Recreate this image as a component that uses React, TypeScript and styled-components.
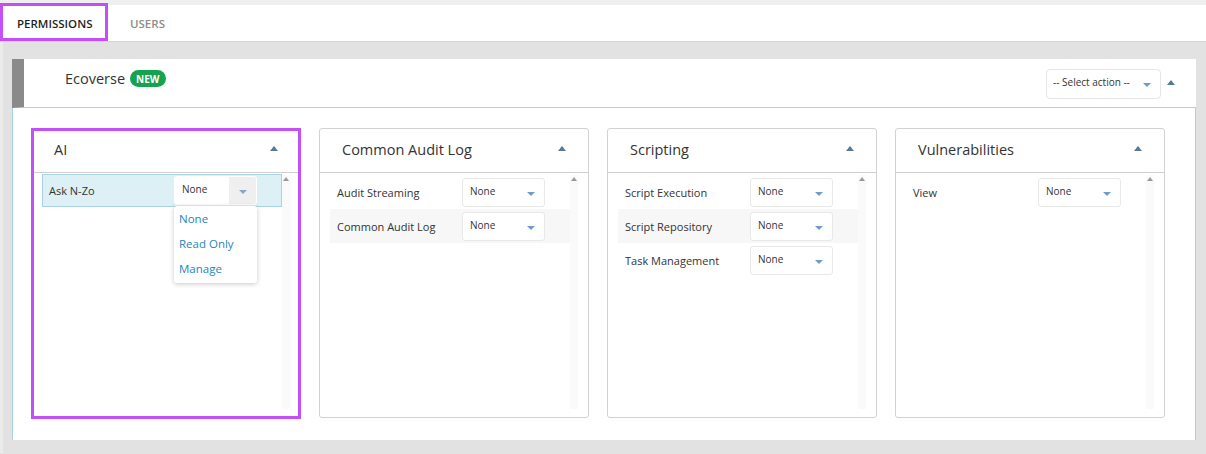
import React from "react";
import styled, { createGlobalStyle } from "styled-components";

const GlobalStyle = createGlobalStyle`
  body {
    margin: 0;
    background: #e2e2e2;
    font-family: "Open Sans", "Noto Sans", sans-serif;
    color: #333;
  }
`;

const TopStrip = styled.div`
  height: 5px;
  background: #efefef;
`;

const TabBar = styled.div`
  display: flex;
  height: 36px;
  background: #fff;
  border-bottom: 1px solid #d4d4d4;
`;

const Tab = styled.div<{ $active?: boolean }>`
  position: relative;
  display: flex;
  align-items: center;
  box-sizing: border-box;
  padding: ${(p) => (p.$active ? "0 0 0 17px" : "0 0 0 22px")};
  width: ${(p) => (p.$active ? "108px" : "auto")};
  font-size: 11.5px;
  font-weight: 600;
  color: ${(p) => (p.$active ? "#1f1f1f" : "#8c8c8c")};

  ${(p) =>
    p.$active &&
    `
    &::after {
      content: "";
      position: absolute;
      inset: -2px 0 0 0;
      border: 3px solid #c24ff7;
    }
  `}
`;

const Content = styled.div`
  border-left: 3px solid #ebebeb;
  padding: 17px 10px 13px 9px;
`;

const Panel = styled.div`
  display: flex;
  flex-direction: column;
`;

const PanelHeader = styled.div`
  display: flex;
  align-items: center;
  height: 48px;
  background: #fff;
  border-left: 12px solid #8a8a8a;
  border-bottom: 1px solid #a9d5e2;
  padding: 0 20px 0 41px;
`;

const PanelTitle = styled.div`
  display: flex;
  align-items: center;
  gap: 5px;
  font-size: 14.5px;
  margin-top: -9px;
  flex: 1;
`;

const NewBadge = styled.span`
  display: inline-flex;
  align-items: center;
  height: 17px;
  padding: 0 6px;
  border-radius: 9px;
  background: #16a34f;
  color: #fff;
  font-size: 10px;
  font-weight: 700;
`;

const ActionSelect = styled.div`
  display: flex;
  align-items: center;
  justify-content: space-between;
  box-sizing: border-box;
  width: 115px;
  height: 30px;
  margin-top: 1px;
  padding: 0 9px 4px 6px;
  border: 1px solid #e6e6e6;
  border-radius: 4px;
  font-size: 10px;
  color: #333;
`;

const CaretDown = styled.span<{ $grey?: boolean }>`
  display: inline-block;
  width: 0;
  height: 0;
  margin-top: 6px;
  border-left: 4px solid transparent;
  border-right: 4px solid transparent;
  border-top: 4px solid ${(p) => (p.$grey ? "#8aa7c2" : "#6d9ccb")};
`;

const CaretUp = styled.span<{ $small?: boolean }>`
  display: inline-block;
  width: 0;
  height: 0;
  border-left: ${(p) => (p.$small ? 3 : 4)}px solid transparent;
  border-right: ${(p) => (p.$small ? 3 : 4)}px solid transparent;
  border-bottom: ${(p) => (p.$small ? 4 : 5)}px solid ${(p) => (p.$small ? "#999" : "#55799b")};
`;

const HeaderCaret = styled.div`
  margin-left: 6px;
  margin-right: 1px;
  margin-top: -8px;
`;

const PanelBody = styled.div`
  display: flex;
  gap: 18px;
  background: #fff;
  border-left: 1px solid #a9d5e2;
  border-right: 1px solid #a9d5e2;
  padding: 20px 18px 22px 18px;
`;

const Card = styled.div<{ $focused?: boolean }>`
  position: relative;
  display: flex;
  flex-direction: column;
  box-sizing: border-box;
  width: 270px;
  height: 290px;
  border: 1px solid #d2d2d2;
  border-radius: 3px;

  ${(p) =>
    p.$focused &&
    `
    &::after {
      content: "";
      position: absolute;
      inset: -1px -1px -2px -1px;
      border: 3px solid #c24ff7;
      pointer-events: none;
    }
  `}
`;

const CardHeader = styled.div`
  display: flex;
  align-items: center;
  justify-content: space-between;
  height: 44px;
  padding: 0 22px 4px 22px;
  box-sizing: border-box;
  border-bottom: 1px solid #cfcfcf;
  font-size: 14.5px;
  color: #333;

  span:first-child {
    margin-top: 1px;
  }
`;

const CardBody = styled.div`
  display: flex;
  flex: 1;
  padding: 2px 10px 8px 10px;
  min-height: 0;
`;

const List = styled.div`
  flex: 1;
  display: flex;
  flex-direction: column;
`;

const Row = styled.div<{ $striped?: boolean; $selected?: boolean }>`
  display: flex;
  align-items: center;
  box-sizing: border-box;
  height: ${(p) => (p.$selected ? "33px" : "34px")};
  padding-left: 6px;
  font-size: 11px;
  color: #333;
  background: ${(p) => (p.$selected ? "#ddf0f6" : p.$striped ? "#f7f7f7" : "transparent")};
  border: 1px solid ${(p) => (p.$selected ? "#a9d3e0" : "transparent")};
  margin-top: ${(p) => (p.$selected ? "-1px" : "0")};
`;

const RowLabel = styled.div`
  width: 125px;
  flex-shrink: 0;
`;

const SelectWrap = styled.div`
  position: relative;
`;

const Select = styled.div<{ $open?: boolean }>`
  display: flex;
  box-sizing: border-box;
  width: 83px;
  height: 29px;
  border: 1px solid ${(p) => (p.$open ? "#fff" : "#e8e8e8")};
  border-radius: 3px;
  background: #fff;
  font-size: 10px;
  color: #333;
  overflow: hidden;
`;

const SelectValue = styled.div`
  flex: 1;
  padding: 5px 0 0 7px;
`;

const SelectToggle = styled.div<{ $hover?: boolean }>`
  display: flex;
  justify-content: center;
  align-items: flex-start;
  width: 27px;
  padding-top: 7px;
  background: ${(p) => (p.$hover ? "#efefef" : "transparent")};
`;

const Menu = styled.div`
  position: absolute;
  top: 30px;
  left: 0;
  width: 83px;
  padding: 0 0 2px;
  background: #fff;
  border-radius: 3px;
  box-shadow: 0 1px 5px rgba(0, 0, 0, 0.22);
  z-index: 2;
`;

const MenuItem = styled.div`
  height: 25px;
  line-height: 25px;
  padding-left: 5px;
  font-size: 11.5px;
  color: #1f86b8;
`;

const Scrollbar = styled.div`
  width: 8px;
  background: #fafafa;
  display: flex;
  justify-content: center;
  padding-top: 2px;
  align-items: flex-start;
`;

type Perm = { name: string };
type Group = { title: string; items: Perm[]; focused?: boolean };

const groups: Group[] = [
  { title: "AI", items: [{ name: "Ask N-Zo" }], focused: true },
  { title: "Common Audit Log", items: [{ name: "Audit Streaming" }, { name: "Common Audit Log" }] },
  {
    title: "Scripting",
    items: [{ name: "Script Execution" }, { name: "Script Repository" }, { name: "Task Management" }],
  },
  { title: "Vulnerabilities", items: [{ name: "View" }] },
];

function PermissionSelect({ open }: { open?: boolean }) {
  return (
    <SelectWrap>
      <Select $open={open}>
        <SelectValue>None</SelectValue>
        <SelectToggle $hover={open}>
          <CaretDown $grey={open} />
        </SelectToggle>
      </Select>
      {open && (
        <Menu>
          <MenuItem>None</MenuItem>
          <MenuItem>Read Only</MenuItem>
          <MenuItem>Manage</MenuItem>
        </Menu>
      )}
    </SelectWrap>
  );
}

function GroupCard({ group }: { group: Group }) {
  return (
    <Card $focused={group.focused}>
      <CardHeader>
        <span>{group.title}</span>
        <CaretUp />
      </CardHeader>
      <CardBody>
        <List>
          {group.items.map((item, i) => (
            <Row key={item.name} $striped={i % 2 === 1} $selected={group.focused}>
              <RowLabel>{item.name}</RowLabel>
              <PermissionSelect open={group.focused} />
            </Row>
          ))}
        </List>
        <Scrollbar>
          <CaretUp $small />
        </Scrollbar>
      </CardBody>
    </Card>
  );
}

export default function App() {
  return (
    <>
      <GlobalStyle />
      <TopStrip />
      <TabBar>
        <Tab $active>PERMISSIONS</Tab>
        <Tab>USERS</Tab>
      </TabBar>
      <Content>
        <Panel>
          <PanelHeader>
            <PanelTitle>
              Ecoverse <NewBadge>NEW</NewBadge>
            </PanelTitle>
            <ActionSelect>
              <span>-- Select action --</span>
              <CaretDown />
            </ActionSelect>
            <HeaderCaret>
              <CaretUp />
            </HeaderCaret>
          </PanelHeader>
          <PanelBody>
            {groups.map((g) => (
              <GroupCard key={g.title} group={g} />
            ))}
          </PanelBody>
        </Panel>
      </Content>
    </>
  );
}
